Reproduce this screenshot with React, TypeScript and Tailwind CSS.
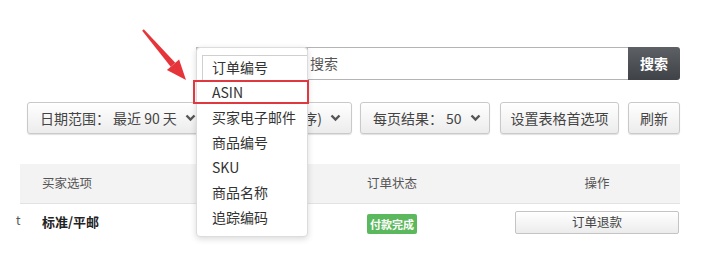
import React from "react";

const Chevron = () => (
  <svg width="11" height="8" viewBox="0 0 11 8" className="ml-[8px] shrink-0">
    <polyline points="1.5,1.5 5.5,5.5 9.5,1.5" fill="none" stroke="#555" strokeWidth="2.4" />
  </svg>
);

const btn =
  "flex items-center h-[32px] rounded-[3px] border border-[#c9c9c9] bg-gradient-to-b from-[#ffffff] to-[#ececec] shadow-[0_1px_1px_rgba(0,0,0,0.12)] text-[14px] text-[#444] whitespace-nowrap";

export default function App() {
  const items = ["订单编号", "ASIN", "买家电子邮件", "商品编号", "SKU", "商品名称", "追踪编码"];
  return (
    <div className="relative w-[710px] h-[266px] overflow-hidden bg-white font-['Noto_Sans_CJK_SC',sans-serif] text-[#333]">
      <div className="pt-[47px]">
        {/* search row */}
        <div className="flex h-[33px] ml-[196px] w-[484px]">
          <div className="w-[112px] border border-[#bbb] bg-white" />
          <div className="flex-1 flex items-center border-y border-[#b4b4b4] bg-white pl-[2px] text-[14px] text-[#555]">
            搜索
          </div>
          <div className="w-[52px] flex items-center justify-center rounded-r-[3px] bg-gradient-to-b from-[#5d6065] to-[#3f4246] text-white text-[14px] font-bold">
            搜索
          </div>
        </div>

        {/* filter row */}
        <div className="flex mt-[22px] ml-[27px] gap-[8px]">
          <div className={`${btn} w-[176px] pl-[12px]`}>
            <span>日期范围：</span>
            <span className="ml-[3px]">最近 90 天</span>
            <Chevron />
          </div>
          <div className={`${btn} w-[141px] justify-end pr-[10px]`}>
            <span>序)</span>
            <Chevron />
          </div>
          <div className={`${btn} w-[130px] pl-[12px]`}>
            <span>每页结果：</span>
            <span className="ml-[3px]">50</span>
            <Chevron />
          </div>
          <div className={`${btn} w-[119px] justify-center ml-[2px]`}>设置表格首选项</div>
          <div className={`${btn} w-[52px] justify-center ml-[1px]`}>刷新</div>
        </div>

        {/* table */}
        <div className="relative mt-[30px] ml-[20px] w-[660px]">
          <div className="grid grid-cols-[325px_150px_185px] h-[40px] items-center bg-[#f3f3f3] border-b border-[#e2e2e2] text-[12.5px] text-[#555]">
            <div className="pl-[22px]">买家选项</div>
            <div className="pl-[22px]">订单状态</div>
            <div className="pl-[20px] pr-[1px] text-center">操作</div>
          </div>
          <div className="grid grid-cols-[325px_150px_185px] h-[36px] items-center">
            <div className="pl-[22px] text-[13px] font-bold text-[#222]">标准/平邮</div>
            <div className="pl-[22px]">
              <span className="inline-flex items-center h-[20px] px-[3px] rounded-[2px] bg-[#5cb85c] text-white text-[11px] font-semibold">
                付款完成
              </span>
            </div>
            <div className="pl-[20px] pr-[1px]">
              <div className="flex items-center justify-center h-[23px] rounded-[2px] border border-[#c4c4c4] bg-gradient-to-b from-[#ffffff] to-[#ececec] text-[12.5px] text-[#444]">
                订单退款
              </div>
            </div>
          </div>
          <span className="absolute left-[-4px] top-[47px] text-[12px] text-[#555]">t</span>
        </div>
      </div>

      {/* dropdown menu */}
      <div className="absolute left-[196px] top-[47px] w-[112px] h-[190px] rounded-[4px] border border-[#dcdcdc] bg-white shadow-[0_2px_6px_rgba(0,0,0,0.15)] pt-[7px]">
        <div className="absolute left-[5px] top-[7px] right-0 h-[26px] border-l border-t border-[#cfcfcf]" />
        {items.map((t) => (
          <div key={t} className="relative h-[25px] flex items-center pl-[15px] text-[14px] text-[#333]">
            {t}
          </div>
        ))}
      </div>

      {/* red highlight */}
      <div className="absolute left-[193px] top-[80px] w-[116px] h-[24px] border-2 border-[#e0383f]" />

      {/* arrow */}
      <svg className="absolute left-0 top-0" width="710" height="266" viewBox="0 0 710 266" style={{ pointerEvents: "none" }}>
        <polygon points="142.2,30.7 143.8,29.3 175.3,62.8 170.7,66.8" fill="#e5353b" />
        <polygon points="186,80 179.1,59.6 166.9,70" fill="#e5353b" />
      </svg>
    </div>
  );
}
